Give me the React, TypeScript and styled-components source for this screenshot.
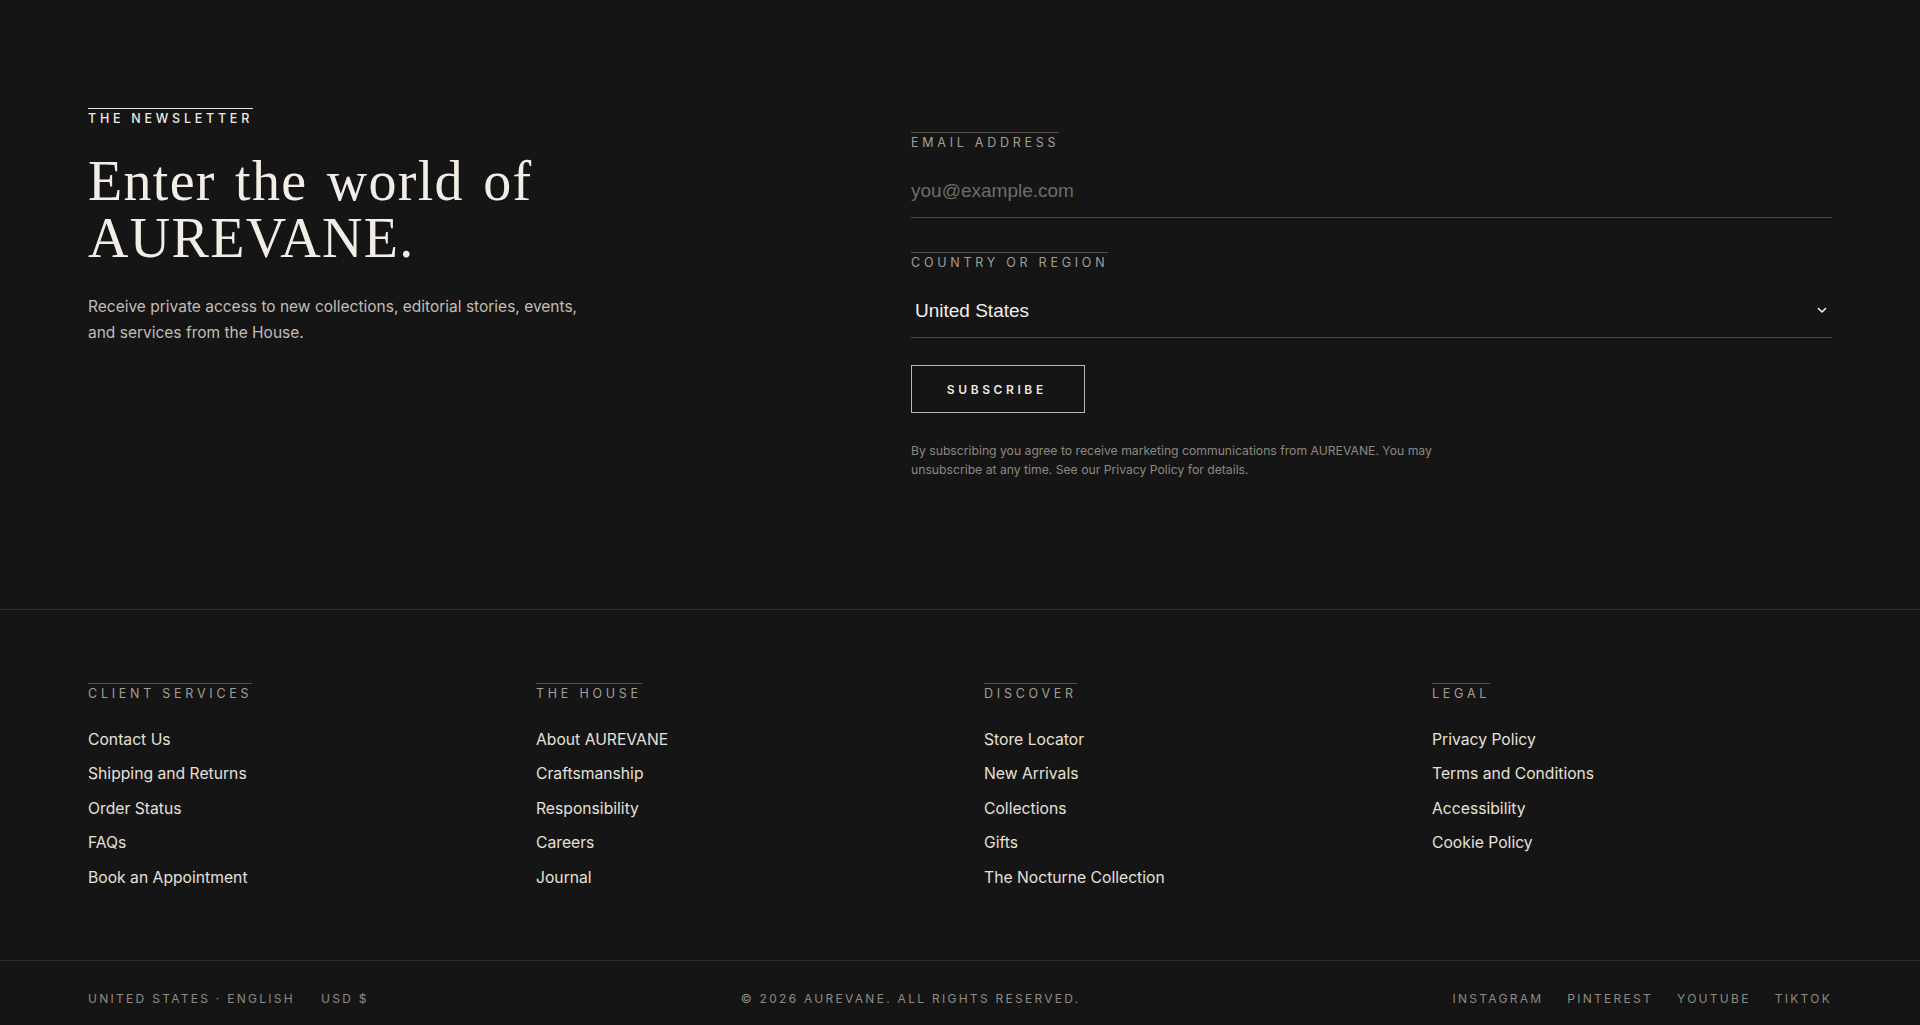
import styled, { createGlobalStyle } from 'styled-components';

const GlobalStyle = createGlobalStyle`
  html, body {
    margin: 0;
    padding: 0;
    background: #151515;
  }
  body {
    font-family: Inter, "Noto Sans", sans-serif;
    color: #e9e4db;
    -webkit-font-smoothing: antialiased;
  }
  * { box-sizing: border-box; }
`;

const Page = styled.footer`
  background: #151515;
  min-height: 1025px;
`;

const Newsletter = styled.section`
  display: grid;
  grid-template-columns: 727px 1fr;
  column-gap: 96px;
  padding: 108px 88px 0;
  height: 610px;
  border-bottom: 1px solid #2e2d2b;
`;

const Intro = styled.div`
  display: flex;
  flex-direction: column;
  align-items: flex-start;
`;

const Eyebrow = styled.span<{ $bright?: boolean }>`
  display: inline-block;
  border-top: 1px solid ${p => (p.$bright ? '#e9e4db' : '#55524e')};
  padding-top: 3px;
  font-size: 12.5px;
  line-height: 14px;
  font-weight: ${p => (p.$bright ? 500 : 400)};
  letter-spacing: 0.3em;
  text-transform: uppercase;
  color: ${p => (p.$bright ? '#efeae1' : '#a39e96')};
  margin-right: -0.3em;
`;

const Heading = styled.h2`
  margin: 27px 0 0;
  font-family: "Liberation Serif", "DejaVu Serif", serif;
  font-weight: 400;
  font-size: 56px;
  line-height: 57px;
  letter-spacing: 1.3px;
  word-spacing: 4px;
  color: #f3eee5;
`;

const Lead = styled.p`
  margin: 27px 0 0;
  max-width: 520px;
  font-size: 15.5px;
  line-height: 26px;
  color: #c2bdb5;
`;

const Form = styled.form`
  display: flex;
  flex-direction: column;
  align-items: flex-start;
  padding-top: 24px;
`;

const Field = styled.label`
  display: flex;
  flex-direction: column;
  align-items: flex-start;
  width: 100%;
  margin-bottom: 34px;
`;

const Control = styled.div`
  position: relative;
  width: 100%;
  border-bottom: 1px solid #494743;
`;

const TextInput = styled.input`
  width: 100%;
  height: 67px;
  padding: 14px 0 0;
  border: 0;
  background: transparent;
  font-family: "Liberation Sans", Arial, sans-serif;
  font-size: 19px;
  color: #ece7de;
  outline: none;
  &::placeholder { color: #6f6c67; }
`;

const Select = styled.select`
  appearance: none;
  width: 100%;
  height: 67px;
  padding: 14px 24px 0 4px;
  border: 0;
  background: transparent;
  font-family: "Liberation Sans", Arial, sans-serif;
  font-size: 19px;
  color: #f3eee5;
  outline: none;
  option { background: #151515; }
`;

const Chevron = styled.svg`
  position: absolute;
  right: 5px;
  top: 37px;
  pointer-events: none;
`;

const Subscribe = styled.button`
  margin-top: -7px;
  width: 174px;
  height: 48px;
  border: 1px solid #bdb8b0;
  background: transparent;
  color: #efeae1;
  font-family: Inter, "Noto Sans", sans-serif;
  font-size: 12px;
  font-weight: 600;
  letter-spacing: 0.3em;
  padding-left: 0.3em;
  text-transform: uppercase;
  cursor: pointer;
`;

const Fine = styled.p`
  margin: 28px 0 0;
  max-width: 530px;
  font-size: 12.2px;
  line-height: 19px;
  color: #8c8882;
`;

const Directory = styled.nav`
  display: grid;
  grid-template-columns: repeat(4, 1fr);
  column-gap: 48px;
  padding: 73px 88px 0;
  height: 351px;
  border-bottom: 1px solid #2e2d2b;
`;

const Column = styled.div`
  display: flex;
  flex-direction: column;
  align-items: flex-start;
`;

const LinkList = styled.ul`
  list-style: none;
  margin: 28px 0 0;
  padding: 0;
  display: flex;
  flex-direction: column;
  gap: 12px;
`;

const FooterLink = styled.a`
  display: block;
  font-size: 15.7px;
  line-height: 22.4px;
  color: #e6e1d8;
  text-decoration: none;
`;

const BottomBar = styled.div`
  display: flex;
  justify-content: space-between;
  align-items: center;
  padding: 12px 88px 0;
  height: 63px;
`;

const Group = styled.div<{ $gap: number }>`
  display: flex;
  gap: ${p => p.$gap}px;
`;

const Meta = styled.span`
  font-size: 12px;
  letter-spacing: 0.19em;
  text-transform: uppercase;
  color: #8f8b84;
`;

const columns = [
  {
    title: 'Client Services',
    links: ['Contact Us', 'Shipping and Returns', 'Order Status', 'FAQs', 'Book an Appointment'],
  },
  {
    title: 'The House',
    links: ['About AUREVANE', 'Craftsmanship', 'Responsibility', 'Careers', 'Journal'],
  },
  {
    title: 'Discover',
    links: ['Store Locator', 'New Arrivals', 'Collections', 'Gifts', 'The Nocturne Collection'],
  },
  {
    title: 'Legal',
    links: ['Privacy Policy', 'Terms and Conditions', 'Accessibility', 'Cookie Policy'],
  },
];

const socials = ['Instagram', 'Pinterest', 'YouTube', 'TikTok'];

export default function App() {
  return (
    <>
      <GlobalStyle />
      <Page>
        <Newsletter>
          <Intro>
            <Eyebrow $bright>The Newsletter</Eyebrow>
            <Heading>
              Enter the world of
              <br />
              AUREVANE.
            </Heading>
            <Lead>
              Receive private access to new collections, editorial stories, events, and services from the House.
            </Lead>
          </Intro>
          <Form onSubmit={e => e.preventDefault()}>
            <Field>
              <Eyebrow>Email Address</Eyebrow>
              <Control>
                <TextInput type="email" placeholder="you@example.com" />
              </Control>
            </Field>
            <Field>
              <Eyebrow>Country or Region</Eyebrow>
              <Control>
                <Select defaultValue="United States">
                  <option>United States</option>
                  <option>Canada</option>
                  <option>United Kingdom</option>
                  <option>France</option>
                  <option>Japan</option>
                </Select>
                <Chevron width="10" height="7" viewBox="0 0 10 7" fill="none">
                  <path d="M1.5 1.5L5 5l3.5-3.5" stroke="#f3eee5" strokeWidth="1.6" strokeLinecap="round" strokeLinejoin="round" />
                </Chevron>
              </Control>
            </Field>
            <Subscribe type="submit">Subscribe</Subscribe>
            <Fine>
              By subscribing you agree to receive marketing communications from AUREVANE. You may unsubscribe at any
              time. See our Privacy Policy for details.
            </Fine>
          </Form>
        </Newsletter>

        <Directory>
          {columns.map(col => (
            <Column key={col.title}>
              <Eyebrow>{col.title}</Eyebrow>
              <LinkList>
                {col.links.map(l => (
                  <li key={l}>
                    <FooterLink href="#">{l}</FooterLink>
                  </li>
                ))}
              </LinkList>
            </Column>
          ))}
        </Directory>

        <BottomBar>
          <Group $gap={26}>
            <Meta>United States · English</Meta>
            <Meta>USD $</Meta>
          </Group>
          <Meta>© 2026 AUREVANE. All rights reserved.</Meta>
          <Group $gap={24}>
            {socials.map(s => (
              <Meta key={s}>{s}</Meta>
            ))}
          </Group>
        </BottomBar>
      </Page>
    </>
  );
}
